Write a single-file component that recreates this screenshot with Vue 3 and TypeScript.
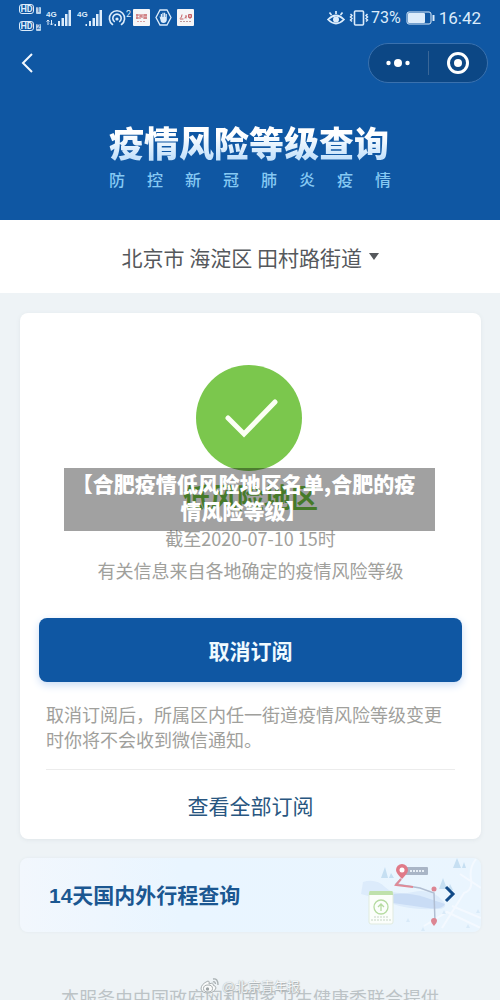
<script setup lang="ts">
import { ref } from 'vue'

const regions: string[] = ['北京市 海淀区 田村路街道']
const region = ref<string>(regions[0])
const signals: { id: number; data: boolean }[] = [
  { id: 1, data: true },
  { id: 2, data: false },
]
</script>

<template>
  <div class="page">
    <header class="hero">
      <div class="status">
        <div class="status-left">
          <div class="hd">
            <div v-for="n in 2" :key="n" class="hd-row"><span class="hd-box">HD</span><span class="hd-num">{{ n }}</span></div>
          </div>
          <svg v-for="s in signals" :key="s.id" class="signal" viewBox="0 0 26 18" aria-hidden="true">
            <text x="0" y="8" class="gen">4G</text>
            <path v-if="s.data" d="M2 16V11M0.5 12.500L2 11L3.500 12.500M5.500 11V16M4 14.500L5.500 16L7 14.500" fill="none" stroke="currentColor" />
            <path d="M8.500 15h1.500v2h-1.500zM12 12h2v5h-2zM15.500 9h2.500v8h-2.500zM19 5h2.500v12h-2.500zM22.500 1h2.500v16h-2.500z" fill="currentColor" />
          </svg>
          <svg class="hotspot" viewBox="0 0 24 18" aria-hidden="true">
            <g fill="none" stroke="currentColor" stroke-width="1.600" stroke-linecap="round">
              <path d="M4.500 15.500a7.600 7.600 0 1 1 9 0" />
              <path d="M6.300 12.500a4.200 4.200 0 1 1 5.400 0" />
            </g>
            <circle cx="9" cy="10" r="1.600" fill="currentColor" />
            <text x="18" y="8" class="two">2</text>
          </svg>
          <svg class="tile" viewBox="0 0 17 17" aria-hidden="true">
            <rect width="17" height="17" rx="1" fill="#f5f5f7" />
            <path d="M3 6h3M3 9h3M4 5v5M7 5v5M7 7h2M9 5v4M11 5v5M11 6h3M11 9h3M13 5v5" stroke="#c56065" fill="none" />
            <path d="M4 12.500h9" stroke="#d7a2a3" stroke-dasharray="2 1" />
          </svg>
          <svg class="tile" viewBox="0 0 17 17" aria-hidden="true">
            <path d="M5 1h7l4 7.500l-4 7.500H5L1 8.500z" fill="none" stroke="currentColor" stroke-width="1.300" />
            <path d="M4.500 7.500q1-.5 1.300 1V5h1.200v3h.4V3.800h1.200V8H9V3.800h1.200V8h.4V5h1.200v6q-.4 3-3.300 3T5.500 11z" fill="currentColor" />
          </svg>
          <svg class="tile" viewBox="0 0 17 17" aria-hidden="true">
            <rect width="17" height="17" rx="1" fill="#f5f5f7" />
            <path d="M3 9.500q2-1 2-4M3 10h3.500M7.500 9l2-1.500M9 6v3.500M11.500 5.500h3v3h-3zM13 5v5" stroke="#c56065" fill="none" />
            <path d="M3 12.500h11" stroke="#bd9a9c" stroke-dasharray="2 1" />
          </svg>
        </div>
        <div class="status-right">
          <svg class="eye" viewBox="0 0 18 18" aria-hidden="true">
            <g fill="none" stroke="currentColor" stroke-width="1.700">
              <path d="M1 10.500Q9 2.500 17 10.500Q9 18.500 1 10.500z" />
              <path d="M9 5V2M4.500 6L2.500 3.500M13.500 6L15.500 3.500" />
            </g>
            <circle cx="9" cy="10.500" r="3" fill="currentColor" />
          </svg>
          <svg class="vibrate" viewBox="0 0 20 18" aria-hidden="true">
            <rect x="5.500" y="2" width="9" height="14" rx="1" fill="none" stroke="currentColor" stroke-width="1.600" />
            <path d="M1.500 5l1.500 1.500l-1.500 1.500l1.500 1.500l-1.500 1.500l1.500 1.500M18.500 5l-1.500 1.500l1.500 1.500l-1.500 1.500l1.500 1.500l-1.500 1.500" fill="none" stroke="currentColor" stroke-width="1.500" />
          </svg>
          <span class="percent">73%</span>
          <svg class="battery" viewBox="0 0 29 14" aria-hidden="true">
            <rect x="1" y="1" width="24" height="12" rx="2" fill="none" stroke="currentColor" />
            <rect x="2" y="2" width="17" height="10" rx="1" fill="currentColor" />
            <path d="M27.500 4v6" stroke="currentColor" stroke-width="2" />
          </svg>
          <span class="clock">16:42</span>
        </div>
      </div>
      <nav class="nav">
        <button class="back" type="button" aria-label="返回">
          <svg viewBox="0 0 12 20" aria-hidden="true"><path d="M11 1L2 10L11 19" fill="none" stroke="currentColor" stroke-width="2" /></svg>
        </button>
        <div class="capsule">
          <button type="button" aria-label="更多">
            <svg width="24" height="10" viewBox="0 0 24 10" aria-hidden="true"><g fill="currentColor"><circle cx="2.500" cy="5" r="2.200" /><circle cx="12" cy="5" r="4" /><circle cx="21.500" cy="5" r="2.200" /></g></svg>
          </button>
          <button type="button" aria-label="关闭">
            <svg width="24" height="24" viewBox="0 0 24 24" aria-hidden="true"><circle cx="12" cy="12" r="9.500" fill="none" stroke="currentColor" stroke-width="3" /><circle cx="12" cy="12" r="4" fill="currentColor" /></svg>
          </button>
        </div>
      </nav>
      <div class="heading">
        <h1>疫情风险等级查询</h1>
        <p>防控新冠肺炎疫情</p>
      </div>
    </header>

    <div class="region">
      <select v-model="region" aria-label="所在地区">
        <option v-for="r in regions" :key="r">{{ r }}</option>
      </select>
      <span class="caret"></span>
    </div>

    <main class="content">
      <section class="card">
        <svg class="check" viewBox="0 0 106 106" aria-hidden="true">
          <circle cx="53" cy="53" r="53" fill="#7bc74d" />
          <path d="M32 53L48 69L79 37" fill="none" stroke="#fbfff4" stroke-width="5" stroke-linecap="round" />
        </svg>
        <h2>低风险地区</h2>
        <p class="date">截至2020-07-10 15时</p>
        <p class="source">有关信息来自各地确定的疫情风险等级</p>
        <button class="primary" type="button">取消订阅</button>
        <p class="note">取消订阅后，所属区内任一街道疫情风险等级变更时你将不会收到微信通知。</p>
        <a class="all" href="#">查看全部订阅</a>
        <div class="caption">【合肥疫情低风险地区名单,合肥的疫<br />情风险等级】</div>
      </section>

      <a class="trip" href="#">
        <svg class="map" viewBox="0 0 140 74" aria-hidden="true">
          <path d="M22 24Q35 20 44 29T72 34T103 44Q108 52 92 51Q68 52 52 46T20 36z" fill="#dcebfb" />
          <path d="M51 36Q68 34 83 39T104 46Q101 52 87 50T52 45z" fill="#c9dcf5" />
          <path d="M135 1Q128 10 130 21T123 35L101 70M119 16L140 30M111 48L140 60M83 68L106 54L140 70" fill="none" stroke="#f4f9ff" stroke-width="2" />
          <g fill="#c6dff2"><path d="M44 9l-4 11h7zM50 15l-2 5h5zM116 0l-4 10h8zM123 4l-2 6h4zM102 20l-4 11h8zM109 26l-2 6h5z" /></g>
          <g fill="#d9eaf8"><path d="M67 60l-2 4h4zM82 69l-2 4h4zM103 52l-2 4h4zM127 66l-2 4h4zM137 51l-2 4h4z" /></g>
          <path d="M60 21L55 26L79 30L93 35L94 64" fill="none" stroke="#b1bed2" stroke-width="1.500" />
          <path d="M60 21L55 27L72 29" fill="none" stroke="#e08a97" stroke-width="2" />
          <rect x="64" y="9" width="23" height="8" rx="1" fill="#a9b5c6" />
          <path d="M69 13h15" stroke="#e7eef5" stroke-width="2" stroke-dasharray="2 1" />
          <path d="M61 21Q55 15 55 12a6 6 0 0 1 12 0Q67 15 61 21z" fill="#e07a88" />
          <circle cx="61" cy="12" r="2.500" fill="#fff" />
          <g fill="#dc8592"><circle cx="93" cy="31" r="2.500" /><path d="M93 68Q90 65 90 63a3 3 0 0 1 6 0Q96 65 93 68z" /></g>
          <rect x="28" y="34" width="24" height="32" rx="2" fill="#fbfefb" stroke="#e0ebdf" />
          <path d="M29 33h22q1 0 1 4H28q0-4 1-4" fill="#bfe1ac" />
          <g fill="none" stroke="#b6dba1" stroke-width="1.300"><circle cx="40" cy="49" r="7" /><path d="M40 53V46M37 49l3-3l3 3" /></g>
          <path d="M33 59h14M30 62h20" stroke="#c8d5c6" stroke-dasharray="2 1" />
        </svg>
        <span>14天国内外行程查询</span>
        <svg class="arrow" viewBox="0 0 12 18" aria-hidden="true"><path d="M2 2L9 9L2 16" fill="none" stroke="currentColor" stroke-width="3" /></svg>
      </a>
    </main>

    <footer>本服务由中国政府网和国家卫生健康委联合提供</footer>

    <div class="watermark">
      <svg viewBox="0 0 20 18" aria-hidden="true">
        <g fill="#fafbfb" stroke="#a9b0b2">
          <path d="M8 4Q1 7 1 12Q2 16 8 16T16 11Q16 9 13 8Q14 5 9 7Q10 4 8 4z" />
          <ellipse cx="8" cy="11.500" rx="4.500" ry="3.500" />
        </g>
        <circle cx="7.500" cy="12" r="1.700" fill="#9da4a6" />
        <path d="M13 2Q18 1 18 8M13 5Q15 4 15.500 7" fill="none" stroke="#a9b0b2" stroke-width="1.300" />
      </svg>
      <span>@北京青年报</span>
    </div>
  </div>
</template>

<style>
body {
  margin: 0;
}
</style>

<style scoped>
* {
  box-sizing: border-box;
}
.page {
  position: relative;
  height: 100vh;
  overflow: hidden;
  background: #eef3f6;
  font-family: "Noto Sans CJK SC", sans-serif;
}
h1,
h2,
p {
  margin: 0;
}
button {
  border: 0;
  padding: 0;
  background: none;
  color: inherit;
  font-family: inherit;
  display: flex;
  align-items: center;
  justify-content: center;
}
a {
  text-decoration: none;
}
.hero {
  height: 220px;
  background: #0f57a3;
  color: #dcecfb;
}
.status {
  display: flex;
  justify-content: space-between;
  height: 35px;
  padding: 0 19px;
  font-family: Roboto, sans-serif;
}
.status-left,
.status-right {
  display: flex;
  align-items: center;
}
.status-left {
  gap: 5px;
}
.hd {
  display: flex;
  flex-direction: column;
  gap: 7px;
}
.hd-row {
  display: flex;
  align-items: flex-end;
  gap: 2px;
}
.hd-box {
  width: 15px;
  height: 10px;
  border: 1px solid currentColor;
  border-radius: 3px;
  font-size: 9px;
  font-weight: 700;
  line-height: 8px;
  text-align: center;
}
.hd-num {
  width: 5px;
  height: 7px;
  border-radius: 1px;
  background: #b9d3ec;
  color: #0f57a3;
  font-size: 7px;
  line-height: 7px;
  text-align: center;
}
.signal {
  width: 26px;
  height: 18px;
}
.gen {
  font-family: "Liberation Sans", sans-serif;
  font-size: 8px;
  font-weight: 700;
  fill: currentColor;
}
.hotspot {
  width: 24px;
  height: 18px;
  margin-right: -4px;
}
.two {
  font-size: 9px;
  fill: currentColor;
}
.tile {
  width: 17px;
  height: 17px;
}
.eye {
  width: 18px;
  height: 18px;
}
.vibrate {
  width: 20px;
  height: 18px;
  margin: 0 2px 0 4px;
}
.percent {
  font-size: 16px;
}
.battery {
  width: 29px;
  height: 14px;
  margin: 0 4px 0 5px;
}
.clock {
  font-size: 17px;
}
.nav {
  display: flex;
  align-items: center;
  justify-content: space-between;
  padding: 8px 12px 0 20px;
}
.back {
  width: 14px;
  height: 40px;
  color: #f3f9ff;
}
.back svg {
  width: 12px;
  height: 20px;
}
.capsule {
  display: flex;
  align-items: center;
  width: 120px;
  height: 40px;
  border: 1px solid #3a71ae;
  border-radius: 20px;
  background: #0c4785;
  color: #fff;
}
.capsule button {
  flex: 1;
  height: 24px;
}
.capsule button + button {
  border-left: 1px solid #3a6798;
}
.heading {
  width: 282px;
  margin: 36px auto 0;
}
h1 {
  font-size: 35px;
  line-height: 46px;
  font-weight: 900;
  white-space: nowrap;
  background: linear-gradient(#fff 35%, #c5e2fb 85%);
  background-clip: text;
  color: transparent;
}
.heading p {
  color: #86c9f3;
  font-size: 16px;
  line-height: 24px;
  font-weight: 500;
  margin-top: 2px;
  text-align: justify;
  text-align-last: justify;
}
.region {
  display: flex;
  align-items: center;
  justify-content: center;
  gap: 6px;
  height: 73px;
  background: #fff;
}
select {
  appearance: none;
  border: 0;
  padding: 0;
  background: none;
  color: #55585c;
  font-family: inherit;
  font-size: 21px;
  line-height: 32px;
}
.caret {
  border: 5px solid transparent;
  border-top: 7px solid #55585c;
  border-bottom: 0;
}
.content {
  display: flex;
  flex-direction: column;
  gap: 19px;
  padding: 20px 19px 0 20px;
}
.card {
  position: relative;
  display: flex;
  flex-direction: column;
  align-items: center;
  padding: 52px 19px 14px;
  border-radius: 8px;
  background: #fff;
  box-shadow: 0 1px 4px #dfe5e9;
}
.check {
  width: 106px;
  height: 106px;
  margin-right: 4px;
}
h2 {
  margin-top: 6px;
  color: #6fc142;
  font-size: 27px;
  line-height: 40px;
  font-weight: 700;
}
.date,
.source,
.note {
  color: #a0a09c;
  font-size: 18px;
}
.date {
  margin-top: 8px;
  line-height: 26px;
}
.source {
  margin-top: 6px;
  line-height: 26px;
}
.primary {
  align-self: stretch;
  height: 64px;
  margin-top: 35px;
  border-radius: 8px;
  background: #0f57a3;
  box-shadow: 0 3px 8px #c9dcf5;
  color: #effaff;
  font-size: 21px;
  font-weight: 700;
}
.note {
  align-self: stretch;
  margin: 20px 7px 0;
  padding-bottom: 17px;
  border-bottom: 1px solid #ececec;
  line-height: 25px;
}
.all {
  margin-top: 15px;
  color: #285680;
  font-size: 21px;
  line-height: 40px;
}
.caption {
  position: absolute;
  top: 155px;
  left: 44px;
  right: 46px;
  padding: 2px 12px 7px 0;
  background: rgba(0, 0, 0, 0.37);
  color: #fff;
  font-size: 21px;
  line-height: 27px;
  font-weight: 900;
  text-align: center;
  white-space: nowrap;
}
.trip {
  position: relative;
  display: flex;
  align-items: center;
  justify-content: space-between;
  height: 74px;
  padding: 0 25px 2px 29px;
  border-radius: 8px;
  overflow: hidden;
  background: linear-gradient(90deg, #f2f7fd, #e9f5ff 35%, #eaf5fe);
  box-shadow: 0 0 3px #dfe7ed;
  color: #1b5791;
  font-family: "Liberation Sans", "Noto Sans CJK SC", sans-serif;
  font-size: 21px;
  font-weight: 700;
}
.trip span {
  position: relative;
}
.map {
  position: absolute;
  top: 0;
  right: 0;
  width: 140px;
  height: 74px;
}
.arrow {
  position: relative;
  width: 12px;
  height: 18px;
  color: #124a87;
}
footer {
  margin-top: 51px;
  color: #bcc3c6;
  font-size: 18px;
  line-height: 28px;
  text-align: center;
  white-space: nowrap;
}
.watermark {
  position: absolute;
  bottom: 4px;
  left: 0;
  right: 0;
  display: flex;
  align-items: center;
  justify-content: center;
  gap: 2px;
  color: #f5f7f8;
  font-size: 13px;
  line-height: 20px;
  text-shadow: 0 0 1px #8f989b, 1px 1px 1px #a9b0b3;
}
.watermark svg {
  width: 20px;
  height: 18px;
}
</style>
